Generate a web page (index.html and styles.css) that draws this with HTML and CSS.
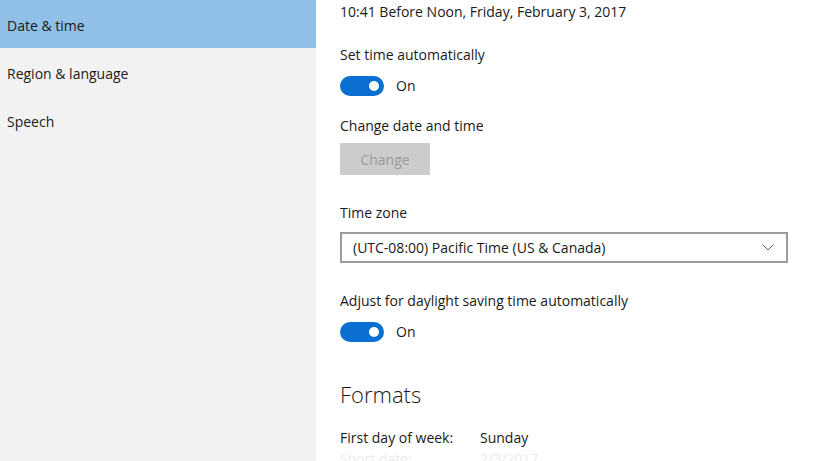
FILE: index.html
```html
<!DOCTYPE html>
<html>
<head>
<meta charset="utf-8">
<link rel="stylesheet" href="styles.css">
</head>
<body>
<div class="app">
  <nav class="sidebar">
    <div class="nav-item selected">Date &amp; time</div>
    <div class="nav-item">Region &amp; language</div>
    <div class="nav-item">Speech</div>
  </nav>
  <main class="content">
    <div class="now">10:41 Before Noon, Friday, February 3, 2017</div>
    <div class="label l-auto">Set time automatically</div>
    <div class="toggle-row">
      <span class="toggle"><span class="knob"></span></span>
      <span class="toggle-text">On</span>
    </div>
    <div class="label l-change">Change date and time</div>
    <button class="btn" disabled>Change</button>
    <div class="label l-zone">Time zone</div>
    <div class="select">
      <span>(UTC-08:00) Pacific Time (US &amp; Canada)</span>
      <svg class="chev" width="12" height="7" viewBox="0 0 12 7"><path d="M0.5 0.5 L6 6 L11.5 0.5" fill="none" stroke="#666" stroke-width="1"/></svg>
    </div>
    <div class="label l-dst">Adjust for daylight saving time automatically</div>
    <div class="toggle-row">
      <span class="toggle"><span class="knob"></span></span>
      <span class="toggle-text">On</span>
    </div>
    <h2 class="heading">Formats</h2>
    <div class="fmt-row first"><span class="fmt-key">First day of week:</span><span>Sunday</span></div>
    <div class="fmt-row faint"><span class="fmt-key">Short date:</span><span>2/3/2017</span></div>
  </main>
</div>
</body>
</html>
```

FILE: styles.css
```css
html, body {
  margin: 0;
  padding: 0;
  height: 461px;
  overflow: hidden;
  background: #ffffff;
}
body {
  font-family: "Open Sans", "Noto Sans", sans-serif;
  font-size: 14px;
  color: #1a1a1a;
}
.app {
  display: flex;
  height: 461px;
  overflow: hidden;
}
.sidebar {
  width: 316px;
  flex: none;
  background: #f2f2f2;
  display: flex;
  flex-direction: column;
}
.nav-item {
  height: 48px;
  flex: none;
  box-sizing: border-box;
  padding-top: 16px;
  line-height: 20px;
  padding-left: 7px;
  color: #1a1a1a;
}
.nav-item.selected {
  background: #90c0e8;
}
.content {
  flex: 1;
  padding-left: 24px;
  display: flex;
  flex-direction: column;
  align-items: flex-start;
}
.content > * {
  flex: none;
}
.now {
  line-height: 20px;
  margin-top: 2px;
}
.label {
  line-height: 20px;
}
.l-auto { margin-top: 23px; }
.toggle-row {
  display: flex;
  align-items: center;
  margin-top: 11px;
  height: 20px;
}
.toggle {
  width: 44px;
  height: 20px;
  border-radius: 10px;
  background: #0a6fd1;
  display: flex;
  align-items: center;
  justify-content: flex-end;
  box-sizing: border-box;
  padding-right: 5px;
}
.knob {
  width: 10px;
  height: 10px;
  border-radius: 50%;
  background: #fff;
}
.toggle-text {
  margin-left: 12px;
  line-height: 20px;
}
.l-change { margin-top: 20px; }
.btn {
  margin-top: 7px;
  width: 90px;
  height: 32px;
  border: none;
  background: #cccccc;
  color: #9a9a9a;
  font-family: inherit;
  font-size: 14px;
  padding: 0;
}
.l-zone { margin-top: 28px; }
.select {
  margin-top: 9px;
  width: 448px;
  height: 31px;
  box-sizing: border-box;
  border: 2px solid #9a9a9a;
  display: flex;
  align-items: center;
  justify-content: space-between;
  padding: 0 12px 0 11px;
}
.l-dst { margin-top: 28px; }
.heading {
  margin: 37px 0 0 0;
  font-size: 22px;
  font-weight: 300;
  line-height: 30px;
  color: #1a1a1a;
}
.fmt-row {
  display: flex;
  line-height: 20px;
}
.fmt-row.first {
  margin-top: 19px;
}
.fmt-key {
  width: 140px;
}
.faint {
  margin-top: 1px;
  color: #ececec;
}
```
